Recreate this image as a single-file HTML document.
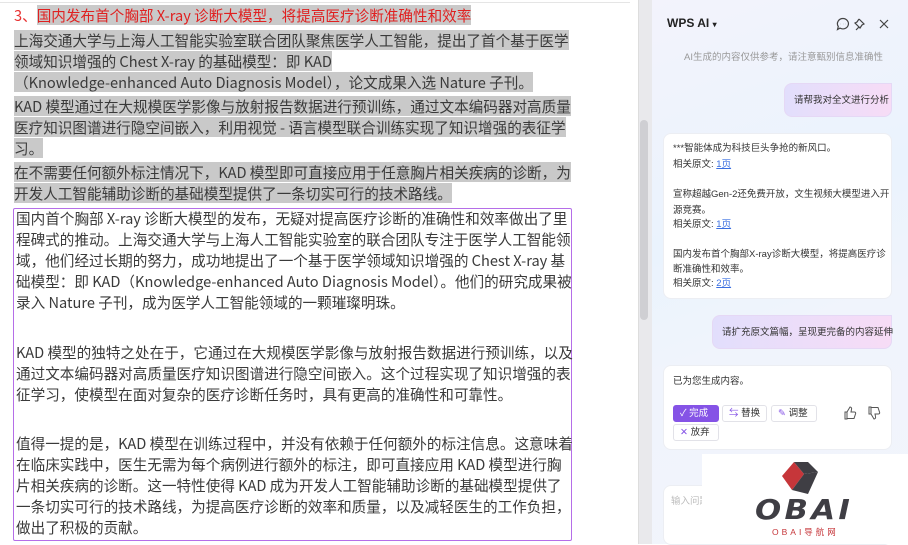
<!DOCTYPE html>
<html><head><meta charset="utf-8"><style>
*{margin:0;padding:0;box-sizing:border-box}
body{width:908px;height:544px;overflow:hidden;background:#fff;font-family:"Liberation Sans","Noto Sans CJK SC",sans-serif;position:relative}
.l{position:absolute;left:16px;font-family:"Noto Sans CJK SC",sans-serif;font-size:14.6px;line-height:21px;height:21px;white-space:nowrap;color:#3a3a3a;letter-spacing:0}
.h{background:#c9c9c9;display:inline-block;height:20px}
.p{position:absolute;font-size:9.5px;color:#333;white-space:nowrap;line-height:13px}
.lk{color:#3b6fe0;text-decoration:underline}
.btn{position:absolute;height:17px;border:1px solid #e2e2e8;border-radius:3px;background:#fff;font-size:9.5px;line-height:15px;color:#333;padding-left:6px}
</style></head><body>
<div style="position:absolute;left:0;top:0;width:630px;height:3px;border-bottom:1px solid #e5e5e5"></div>
<div class="l" style="top:5px;left:14px;color:#e83030">3、<span class="h" style="color:#e02020">国内发布首个胸部 X-ray 诊断大模型，将提高医疗诊断准确性和效率</span></div>
<div class="l" style="top:30px;left:14px"><span class="h">上海交通大学与上海人工智能实验室联合团队聚焦医学人工智能，提出了首个基于医学</span></div>
<div class="l" style="top:51px;left:14px"><span class="h">领域知识增强的 Chest X-ray 的基础模型：即 KAD</span></div>
<div class="l" style="top:72px;left:14px"><span class="h">（Knowledge-enhanced Auto Diagnosis Model），论文成果入选 Nature 子刊。</span></div>
<div class="l" style="top:96px;left:14px"><span class="h">KAD 模型通过在大规模医学影像与放射报告数据进行预训练，通过文本编码器对高质量</span></div>
<div class="l" style="top:117px;left:14px"><span class="h">医疗知识图谱进行隐空间嵌入，利用视觉 - 语言模型联合训练实现了知识增强的表征学</span></div>
<div class="l" style="top:138px;left:14px"><span class="h">习。</span></div>
<div class="l" style="top:162px;left:14px"><span class="h">在不需要任何额外标注情况下，KAD 模型即可直接应用于任意胸片相关疾病的诊断，为</span></div>
<div class="l" style="top:183px;left:14px"><span class="h">开发人工智能辅助诊断的基础模型提供了一条切实可行的技术路线。</span></div>
<div style="position:absolute;left:13px;top:208px;width:559px;height:333px;border:1.5px solid #b56ee8;border-radius:2px"></div>
<div class="l" style="top:208px">国内首个胸部 X-ray 诊断大模型的发布，无疑对提高医疗诊断的准确性和效率做出了里</div>
<div class="l" style="top:229px">程碑式的推动。上海交通大学与上海人工智能实验室的联合团队专注于医学人工智能领</div>
<div class="l" style="top:250px">域，他们经过长期的努力，成功地提出了一个基于医学领域知识增强的 Chest X-ray 基</div>
<div class="l" style="top:271px">础模型：即 KAD（Knowledge-enhanced Auto Diagnosis Model）。他们的研究成果被</div>
<div class="l" style="top:292px">录入 Nature 子刊，成为医学人工智能领域的一颗璀璨明珠。</div>
<div class="l" style="top:342px">KAD 模型的独特之处在于，它通过在大规模医学影像与放射报告数据进行预训练，以及</div>
<div class="l" style="top:363px">通过文本编码器对高质量医疗知识图谱进行隐空间嵌入。这个过程实现了知识增强的表</div>
<div class="l" style="top:384px">征学习，使模型在面对复杂的医疗诊断任务时，具有更高的准确性和可靠性。</div>
<div class="l" style="top:433px">值得一提的是，KAD 模型在训练过程中，并没有依赖于任何额外的标注信息。这意味着</div>
<div class="l" style="top:454px">在临床实践中，医生无需为每个病例进行额外的标注，即可直接应用 KAD 模型进行胸</div>
<div class="l" style="top:475px">片相关疾病的诊断。这一特性使得 KAD 成为开发人工智能辅助诊断的基础模型提供了</div>
<div class="l" style="top:496px">一条切实可行的技术路线，为提高医疗诊断的效率和质量，以及减轻医生的工作负担，</div>
<div class="l" style="top:517px">做出了积极的贡献。</div>

<div style="position:absolute;left:638px;top:0;width:14px;height:544px;background:#e9e9ec;border-left:1px solid #ddd"></div>
<div style="position:absolute;left:640px;top:120px;width:8px;height:200px;background:#cfcfd3;border-radius:4px"></div>
<div style="position:absolute;left:652px;top:0;width:256px;height:544px;background:linear-gradient(160deg,#f3f3fc 0%,#eaf3fd 40%,#f0f4fc 60%,#f2f5fb 100%)"></div>
<div style="position:absolute;left:667px;top:16px;font-size:12px;font-weight:bold;color:#222">WPS AI <span style="font-size:8px">▾</span></div>
<svg style="position:absolute;left:836px;top:17px" width="60" height="14" viewBox="0 0 60 14" fill="none" stroke="#444" stroke-width="1.2"><path d="M7 1.5a5.5 5.2 0 1 1-3 9.6L1.5 12.5l.8-3A5.5 5.2 0 0 1 7 1.5z"/><path d="M4.5 7h.1M7 7h.1M9.5 7h.1" stroke-width="1.5"/><path d="M23 2l5 5-2 1-2 3-1-1-3 3M23 2l-2 3-2 1 5 5"/><path d="M44 3l8 8M52 3l-8 8"/></svg>
<div class="p" style="left:684px;top:51px;color:#999;font-size:9.5px">AI生成的内容仅供参考，请注意甄别信息准确性</div>
<div style="position:absolute;left:784px;top:83px;width:108px;height:34px;border-radius:8px 0 8px 8px;background:linear-gradient(90deg,#e2defc,#f7dcf6);border:1px solid #e5d8f5"></div>
<div class="p" style="left:794px;top:94px">请帮我对全文进行分析</div>
<div style="position:absolute;left:663px;top:133px;width:229px;height:166px;background:#fff;border-radius:8px;border:1px solid #eceef3"></div>
<div class="p" style="left:673px;top:142px">***智能体成为科技巨头争抢的新风口。</div>
<div class="p" style="left:673px;top:158px">相关原文: <span class="lk">1页</span></div>
<div class="p" style="left:673px;top:188px">宣称超越Gen-2还免费开放，文生视频大模型进入开</div>
<div class="p" style="left:673px;top:204px">源竞赛。</div>
<div class="p" style="left:673px;top:218px">相关原文: <span class="lk">1页</span></div>
<div class="p" style="left:673px;top:248px">国内发布首个胸部X-ray诊断大模型，将提高医疗诊</div>
<div class="p" style="left:673px;top:263px">断准确性和效率。</div>
<div class="p" style="left:673px;top:277px">相关原文: <span class="lk">2页</span></div>
<div style="position:absolute;left:712px;top:315px;width:180px;height:34px;border-radius:8px 0 8px 8px;background:linear-gradient(90deg,#e2defc,#f7dcf6);border:1px solid #e5d8f5"></div>
<div class="p" style="left:722px;top:326px">请扩充原文篇幅，呈现更完备的内容延伸</div>
<div style="position:absolute;left:663px;top:365px;width:229px;height:85px;background:#fff;border-radius:8px;border:1px solid #eceef3"></div>
<div class="p" style="left:673px;top:375px">已为您生成内容。</div>
<div class="btn" style="left:673px;top:405px;width:46px;background:#8553e6;border-color:#8553e6;color:#fff">✓ 完成</div>
<div class="btn" style="left:722px;top:405px;width:45px"><span style="color:#8553e6">⇆</span> 替换</div>
<div class="btn" style="left:771px;top:405px;width:46px"><span style="color:#8553e6">✎</span> 调整</div>
<div class="btn" style="left:673px;top:424px;width:46px"><span style="color:#8553e6">✕</span> 放弃</div>
<svg style="position:absolute;left:843px;top:406px" width="40" height="14" viewBox="0 0 40 14" fill="none" stroke="#555" stroke-width="1"><path d="M2 6h2v7H2zM4 6l3-5c1 0 2 1 1.5 2.5L8 6h3.5c1 0 1.5 1 1 2l-1.5 4.5H4"/><path d="M26 8h2V1h-2zM28 8l3 5c1 0 2-1 1.5-2.5L32 8h3.5c1 0 1.5-1 1-2L35 1.5H28"/></svg>
<div style="position:absolute;left:663px;top:485px;width:229px;height:60px;background:#fff;border-radius:8px;border:1px solid #eceef3"></div>
<div class="p" style="left:671px;top:495px;color:#bbb">输入问题</div>
<div style="position:absolute;left:702px;top:454px;width:206px;height:90px;background:#fff"></div>
<svg style="position:absolute;left:778px;top:460px" width="44" height="38" viewBox="0 0 44 38"><polygon points="4,16 16,2 26,14 14,30" fill="#c6363a"/><polygon points="16,2 30,2 40,12 26,14" fill="#3f3e44"/><polygon points="26,14 40,12 30,34 14,30" fill="#3f3e44"/></svg>
<div style="position:absolute;left:755px;top:496px;font-size:28px;font-weight:900;font-style:italic;color:#3f3e44;letter-spacing:3px;font-family:'DejaVu Sans',sans-serif;line-height:28px;transform:scaleX(1.1);transform-origin:left">OBAI</div>
<div style="position:absolute;left:772px;top:526px;font-size:8.5px;color:#c6363a;letter-spacing:3px;white-space:nowrap">OBAI导航网</div>
</body></html>
